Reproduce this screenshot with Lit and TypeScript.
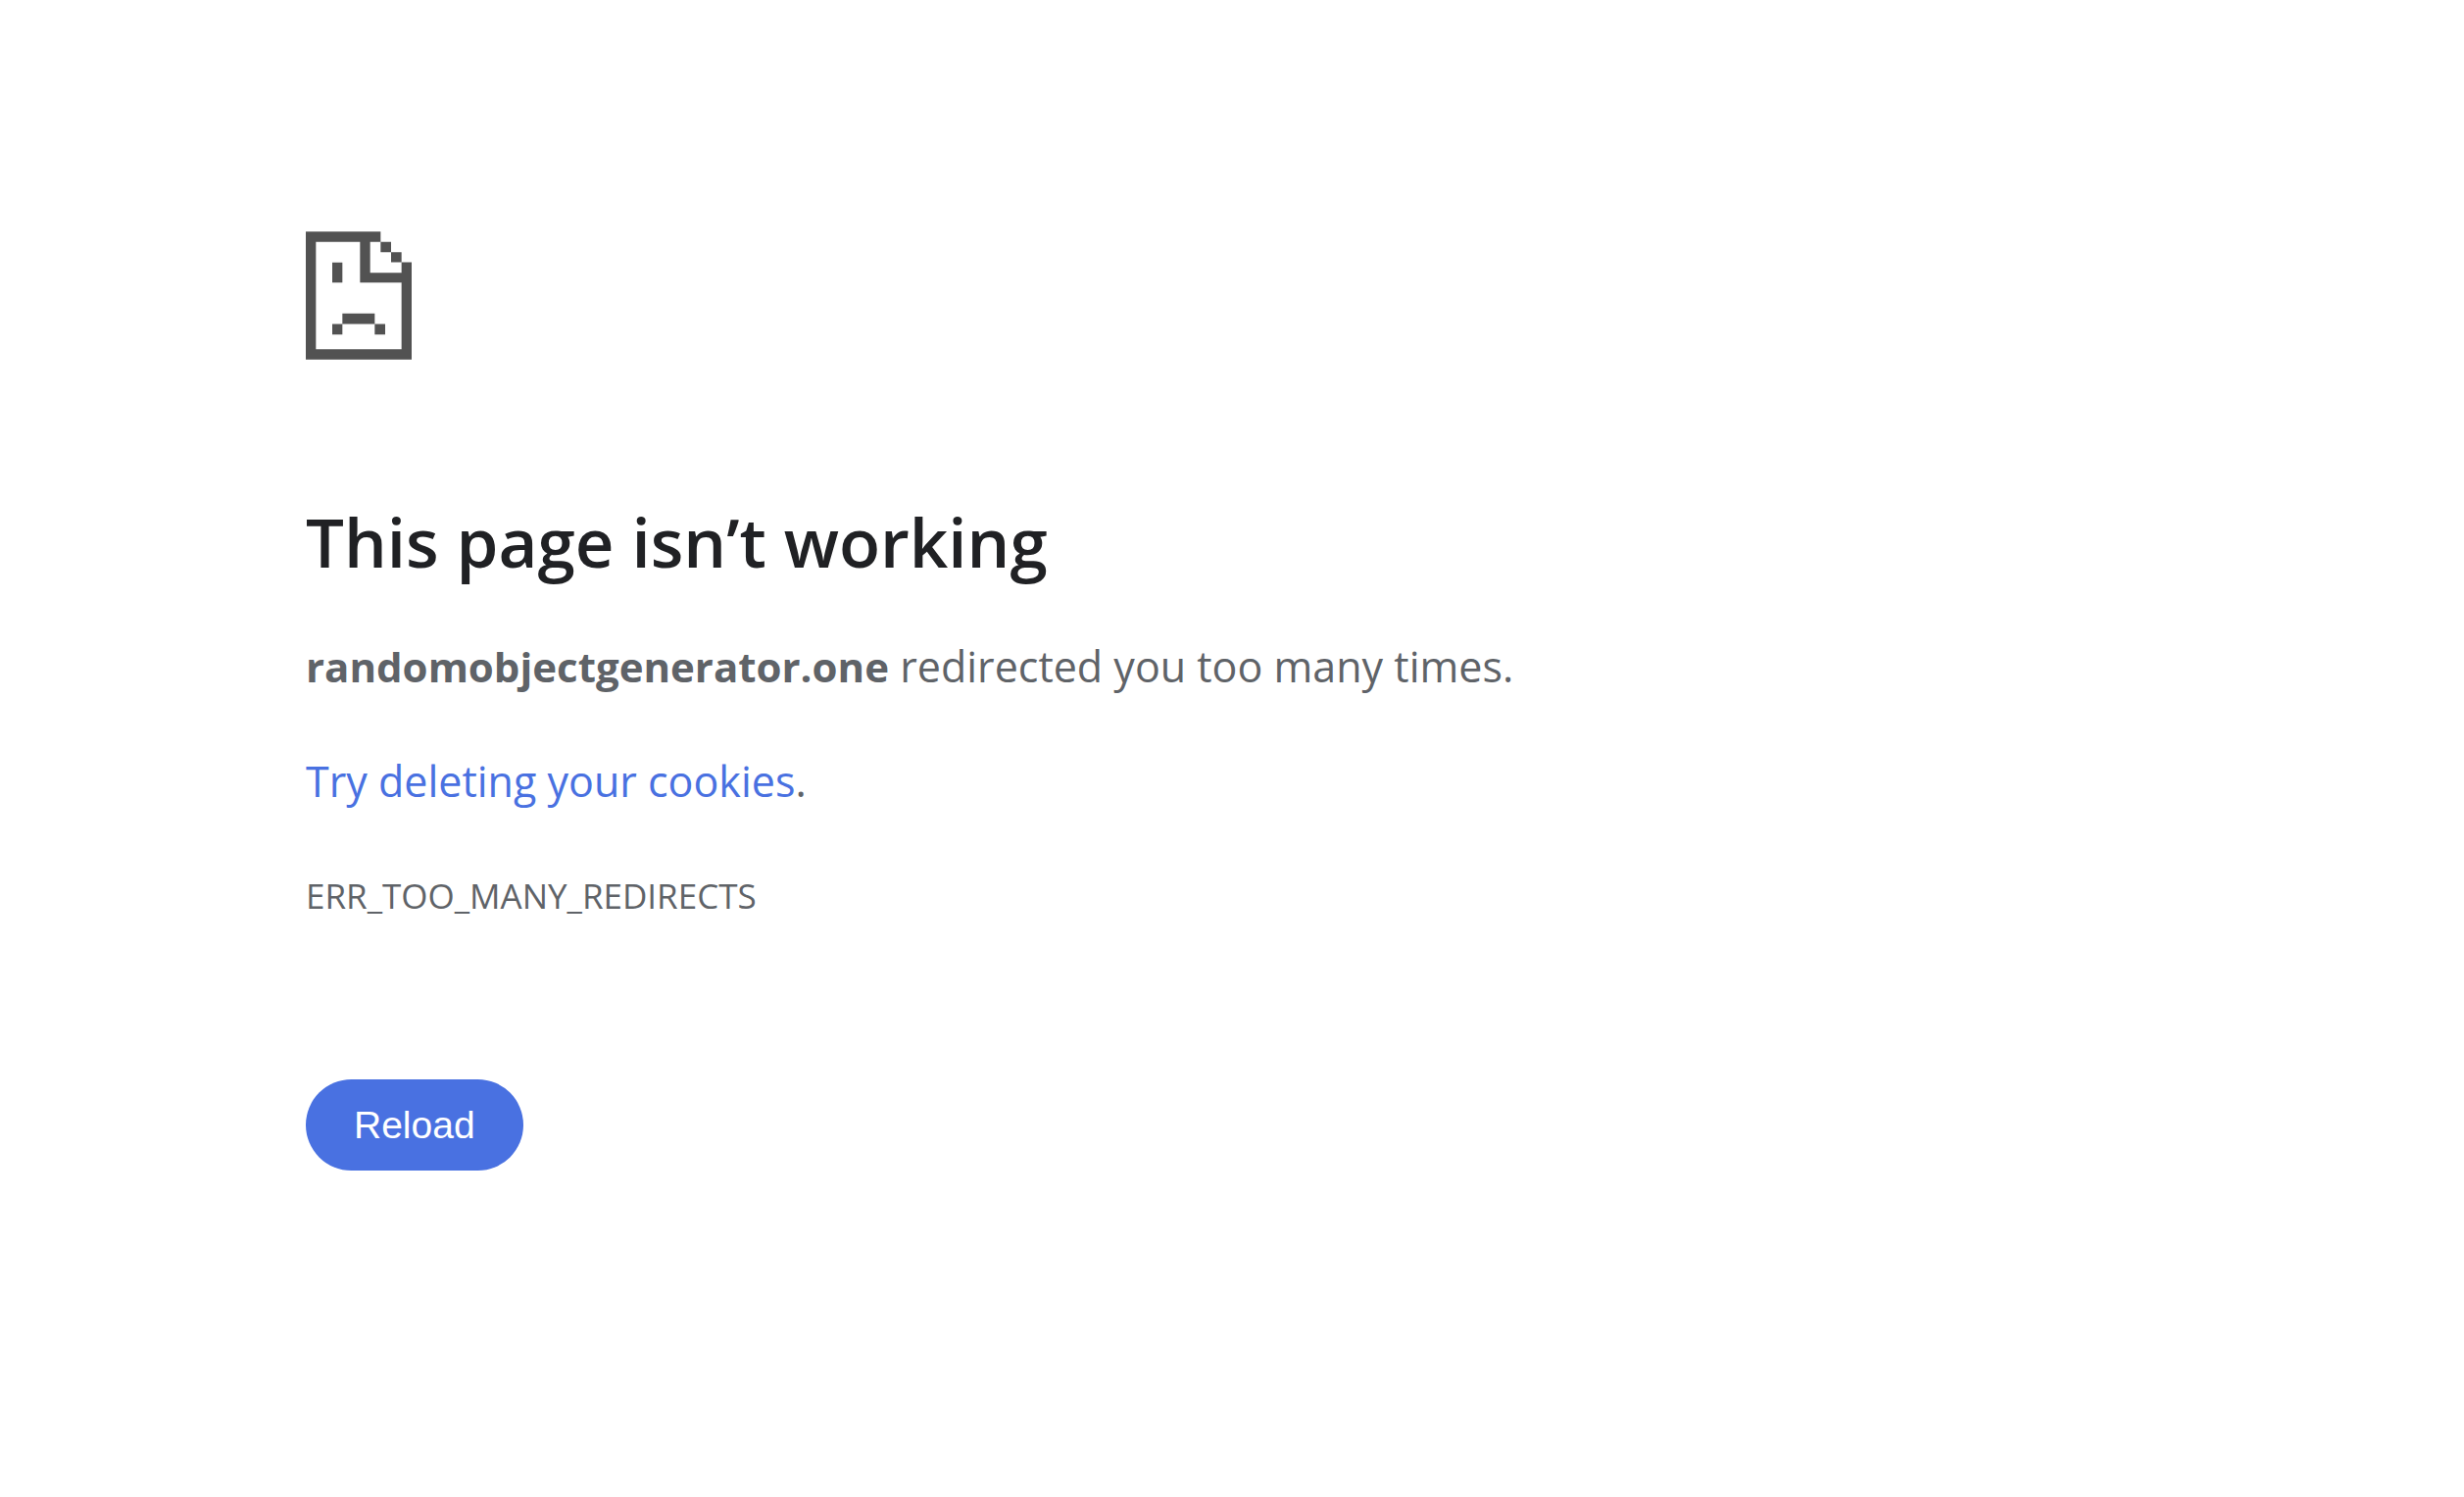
import { LitElement, html, css } from "lit";
import { customElement } from "lit/decorators.js";

@customElement("app-root")
export class AppRoot extends LitElement {
  static styles = css`
    :host {
      display: block;
      min-height: 100vh;
      background: #fff;
      color: #5f6368;
      font-family: "Open Sans", "Noto Sans", sans-serif;
      font-size: 43px;
      line-height: 72px;
    }
    .page {
      box-sizing: border-box;
      max-width: 1890px;
      margin: 0 auto;
      padding: 236px 0 96px;
    }
    .icon {
      display: block;
      width: 108px;
      height: 131px;
      fill: #525252;
    }
    .title {
      margin: 141px 0 48px;
      color: #202124;
      font-size: 69px;
      font-weight: 600;
      line-height: 88px;
    }
    .text {
      margin: 45px 0 0;
    }
    .host {
      font-size: 42px;
    }
    .link {
      color: #4971e1;
      text-decoration: none;
    }
    .code {
      margin: 45px 0 0;
      font-size: 35px;
    }
    .reload {
      display: block;
      margin: 151px 0 0;
      padding: 24px 49px;
      border: 0;
      border-radius: 47px;
      background: #4971e1;
      color: #fff;
      font-family: "Liberation Sans", Arial, sans-serif;
      font-size: 39px;
      line-height: 45px;
      cursor: pointer;
    }
  `;

  render() {
    return html`
      <main class="page">
        <svg class="icon" viewBox="0 0 324 392" aria-hidden="true">
          <path
            d="M0 0H229V32H261V63H293V94H324V392H0ZM31 32V360H293V156H166V32ZM197 32V126H293V94H261V63H229V32Z"
            fill-rule="evenodd"
          />
          <path d="M81 95H112V156H81ZM112 251H211V283H112ZM81 283H112V315H81ZM211 283H243V315H211Z" />
        </svg>
        <h1 class="title">This page isn’t working</h1>
        <p class="text"><strong class="host">randomobjectgenerator.one</strong> redirected you too many times.</p>
        <p class="text"><a class="link" href="#cookies">Try deleting your cookies</a>.</p>
        <p class="code">ERR_TOO_MANY_REDIRECTS</p>
        <button class="reload" type="button">Reload</button>
      </main>
    `;
  }
}
